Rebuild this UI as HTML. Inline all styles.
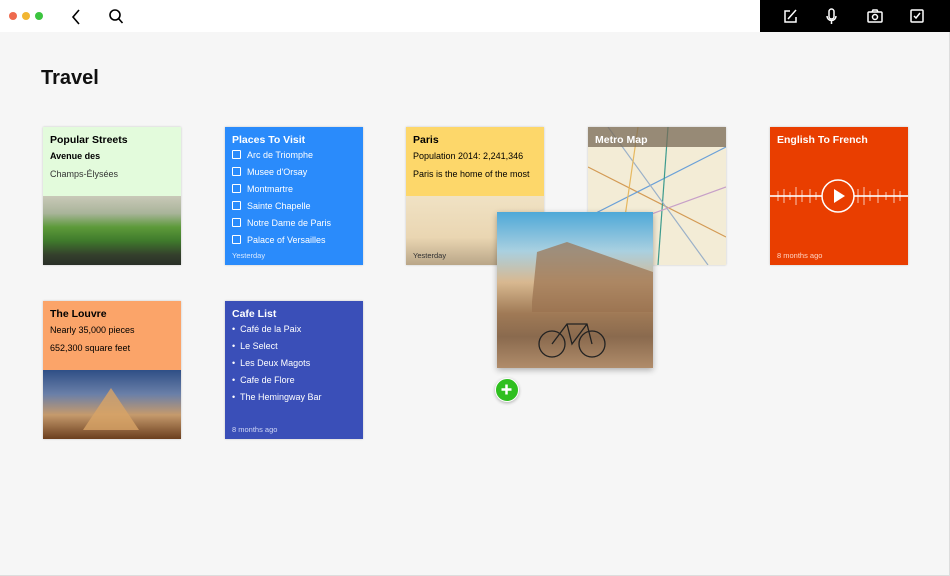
<!DOCTYPE html>
<html><head><meta charset="utf-8"><style>
*{margin:0;padding:0;box-sizing:border-box}
body{width:950px;height:576px;background:#f6f6f6;font-family:"Liberation Sans",sans-serif;position:relative;overflow:hidden;border-right:1px solid #ddd;border-bottom:1px solid #ddd}
.top{position:absolute;left:0;top:0;width:950px;height:32px;background:#fff}
.dot{position:absolute;top:12px;width:8px;height:8px;border-radius:50%}
.tb{position:absolute;left:760px;top:0;width:190px;height:32px;background:#000}
.card{position:absolute;width:138px;height:138px;overflow:hidden;box-shadow:0 0 2px rgba(0,0,0,.2)}
.t{position:absolute;left:7px;font-size:10.5px;font-weight:bold}
.l{position:absolute;left:7px;font-size:9px}
.s{position:absolute;font-size:7.5px}
.cb{display:inline-block;width:9px;height:9px;border:1px solid #fff;border-radius:1px;margin-right:6px;vertical-align:-1px}
h1{position:absolute;left:41px;top:67px;font-size:20px;font-weight:bold;color:#111}
</style></head><body>
<div class="top"></div>
<div class="dot" style="left:9px;background:#ee6a4e"></div>
<div class="dot" style="left:22px;background:#f2b632"></div>
<div class="dot" style="left:35px;background:#3bc43f"></div>
<svg style="position:absolute;left:70px;top:8px" width="60" height="18"><path d="M9 2 3 9l6 7" fill="none" stroke="#000" stroke-width="1.6"/><circle cx="45" cy="7" r="5" fill="none" stroke="#000" stroke-width="1.6"/><path d="M48.5 10.5l4 4.5" stroke="#000" stroke-width="1.6"/></svg>
<div class="tb"><svg width="190" height="32">
<g fill="none" stroke="#fff" stroke-width="1.5">
<path d="M30 11h-5v11h11v-5"/><path d="M28 19l8-9"/>
<rect x="69" y="9" width="5" height="10" rx="2.5"/><path d="M67 16a4.5 4.5 0 0 0 9 0M71.5 21v3"/>
<rect x="108" y="12" width="14" height="10" rx="1"/><circle cx="115" cy="17" r="2.5"/><path d="M112 12l1-2h4l1 2"/>
<rect x="151" y="10" width="12" height="12" rx="1"/><path d="M154 16l2 2 4-5"/>
</g></svg></div>
<h1>Travel</h1>

<div class="card" style="left:43px;top:127px;background:#e3fbdc">
<div class="t" style="top:7px">Popular Streets</div>
<div class="l" style="top:24px;font-weight:bold">Avenue des</div>
<div class="l" style="top:42px;color:#333">Champs-Élysées</div>
<div style="position:absolute;left:0;top:69px;width:138px;height:69px;background:linear-gradient(180deg,#c9c9b8 0%,#a9b49a 25%,#5d9a3a 45%,#3f7a2c 65%,#34402c 85%,#2a2f28 100%)"></div>
</div>

<div class="card" style="left:225px;top:127px;background:#2a8bfb;color:#fff">
<div class="t" style="top:7px">Places To Visit</div>
<div class="l" style="top:23px"><span class="cb"></span>Arc de Triomphe</div>
<div class="l" style="top:40px"><span class="cb"></span>Musee d'Orsay</div>
<div class="l" style="top:57px"><span class="cb"></span>Montmartre</div>
<div class="l" style="top:74px"><span class="cb"></span>Sainte Chapelle</div>
<div class="l" style="top:91px"><span class="cb"></span>Notre Dame de Paris</div>
<div class="l" style="top:108px"><span class="cb"></span>Palace of Versailles</div>
<div class="s" style="left:7px;top:124px;color:#d6e8ff">Yesterday</div>
</div>

<div class="card" style="left:406px;top:127px;background:#fdd76a">
<div class="t" style="top:7px">Paris</div>
<div class="l" style="top:24px">Population 2014: 2,241,346</div>
<div class="l" style="top:42px">Paris is the home of the most</div>
<div style="position:absolute;left:0;top:69px;width:138px;height:69px;background:linear-gradient(180deg,#f0e2c4,#ead6b2 60%,#b9a688)"></div>
<div class="s" style="left:7px;top:124px;color:#333">Yesterday</div>
</div>

<div class="card" style="left:588px;top:127px;background:#f3ecd6">
<svg width="138" height="138" style="position:absolute;left:0;top:0"><g fill="none" stroke-width="1.2">
<path d="M0 40 138 110" stroke="#d39a54"/><path d="M0 90 138 20" stroke="#6aa0d8"/><path d="M80 0 70 138" stroke="#3c9b8e"/><path d="M20 0 120 138" stroke="#9ab0c8"/><path d="M0 110 138 60" stroke="#c7a0c8"/><path d="M50 0 30 138" stroke="#e6b860"/></g></svg>
<div style="position:absolute;left:0;top:0;width:138px;height:20px;background:rgba(120,105,85,.75)"></div>
<div class="t" style="top:7px;color:#fff">Metro Map</div>
</div>

<div class="card" style="left:770px;top:127px;background:#e93e00;color:#fff">
<div class="t" style="top:7px">English To French</div>
<svg width="138" height="138" style="position:absolute;left:0;top:0"><path d="M0 69H138" stroke="#fff" stroke-width="2" opacity=".8"/><g stroke="#fff" stroke-width="1" opacity=".7"><path d="M8 64v10M14 62v14M20 65v8M26 60v18M32 63v12M40 62v14M46 65v8M88 62v14M94 60v18M100 64v10M108 62v14M116 65v8M124 62v14M130 64v10"/></g><circle cx="68" cy="69" r="16" fill="#e93e00" stroke="#fff" stroke-width="1.5"/><path d="M64 62v14l11-7z" fill="#fff"/></svg>
<div class="s" style="left:7px;top:124px;color:#ffd3c0">8 months ago</div>
</div>

<div class="card" style="left:43px;top:301px;background:#fba469">
<div class="t" style="top:7px">The Louvre</div>
<div class="l" style="top:24px">Nearly 35,000 pieces</div>
<div class="l" style="top:42px">652,300 square feet</div>
<div style="position:absolute;left:0;top:69px;width:138px;height:69px;background:linear-gradient(180deg,#2f4f86 0%,#6a7fa8 35%,#c59a6c 65%,#6b3e1e 100%)"></div>
<svg width="138" height="69" style="position:absolute;left:0;top:69px"><path d="M40 60 68 18 96 60z" fill="#d8a466" opacity=".8"/></svg>
</div>

<div class="card" style="left:225px;top:301px;background:#3a4fb8;color:#fff">
<div class="t" style="top:7px">Cafe List</div>
<div class="l" style="top:23px">•&nbsp; Café de la Paix</div>
<div class="l" style="top:40px">•&nbsp; Le Select</div>
<div class="l" style="top:57px">•&nbsp; Les Deux Magots</div>
<div class="l" style="top:74px">•&nbsp; Cafe de Flore</div>
<div class="l" style="top:91px">•&nbsp; The Hemingway Bar</div>
<div class="s" style="left:7px;top:124px;color:#cfd6f5">8 months ago</div>
</div>

<div style="position:absolute;left:497px;top:212px;width:156px;height:156px;box-shadow:0 2px 6px rgba(0,0,0,.3);background:linear-gradient(180deg,#4ea8d8 0%,#a9d0e0 25%,#d8b890 45%,#a07a56 65%,#8a6a4e 80%,#b08c6a 100%)">
<svg width="156" height="156"><path d="M35 90 40 40 70 30 156 60 156 100 35 100z" fill="#9a7250" opacity=".7"/><g fill="none" stroke="#222" stroke-width="1.3"><circle cx="55" cy="132" r="13"/><circle cx="95" cy="132" r="13"/><path d="M55 132 70 112 90 112 95 132M70 112 75 132 90 112"/></g></svg>
</div>
<div style="position:absolute;left:495px;top:378px;width:24px;height:24px;border-radius:50%;background:#2fbf1f;border:1.5px solid #fff;box-shadow:0 1px 3px rgba(0,0,0,.3)"><svg width="21" height="21"><path d="M10.5 5.5v10M5.5 10.5h10" stroke="#fff" stroke-width="2.5"/></svg></div>
</body></html>
